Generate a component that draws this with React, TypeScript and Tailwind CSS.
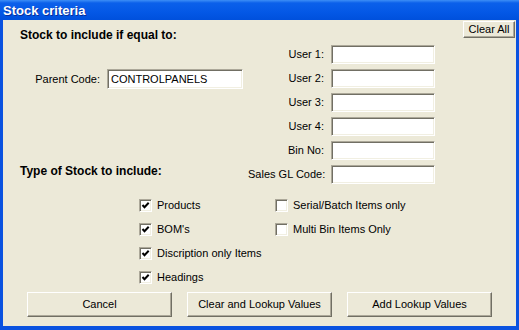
import React from 'react';

function Field({ width, height }: { width: number; height: number }) {
  return (
    <div
      className="bg-white border border-t-[#aca899] border-l-[#aca899] border-b-white border-r-white shadow-[inset_1px_1px_0_#716f64,inset_-1px_-1px_0_#f1efe2]"
      style={{ width, height }}
    />
  );
}

function Check({ label, checked }: { label: string; checked: boolean }) {
  return (
    <div className="flex items-center h-[13px]">
      <div className="relative w-[13px] h-[13px] bg-white border border-t-[#aca899] border-l-[#aca899] border-b-white border-r-white shadow-[inset_1px_1px_0_#716f64,inset_-1px_-1px_0_#f1efe2]">
        {checked && (
          <svg className="absolute left-0 top-0" width="11" height="11" viewBox="0 0 11 11">
            <path d="M2.5 5 L4.5 7.2 L8.7 2.8" fill="none" stroke="#000" strokeWidth="2" />
          </svg>
        )}
      </div>
      <span className="ml-[5px] leading-[13px]">{label}</span>
    </div>
  );
}

function Button({ label, className = '' }: { label: string; className?: string }) {
  return (
    <div
      className={`flex items-center justify-center bg-[#ece9d8] border border-t-white border-l-white border-b-[#716f64] border-r-[#716f64] shadow-[inset_-1px_-1px_0_#aca899] ${className}`}
    >
      {label}
    </div>
  );
}

export default function App() {
  const userFields = ['User 1:', 'User 2:', 'User 3:', 'User 4:', 'Bin No:', 'Sales GL Code:'];

  return (
    <div className="w-[519px] h-[330px] flex flex-col bg-[#0a52e0] font-['Liberation_Sans',Arial,sans-serif] overflow-hidden">
      {/* Title bar */}
      <div className="h-[20px] flex items-center pl-[3px] bg-[linear-gradient(to_bottom,#3d8ef6_0px,#0b60ea_3px,#0458e6_12px,#0050dc_20px)]">
        <span className="text-white font-bold text-[13px] leading-[15px] [text-shadow:1px_1px_0_#0a2f9a]">Stock criteria</span>
      </div>

      {/* Body */}
      <div className="flex-1 mx-[3px] mb-[4px] bg-[#ece9d8] text-[11px] text-black flex flex-col">
        <div className="flex items-start h-[164px]">
          <div className="w-[245px] pl-[17px] flex flex-col">
            <div className="mt-[8px] font-bold text-[12px] leading-[14px]">Stock to include if equal to:</div>
            <div className="mt-[27px] flex items-center">
              <span className="w-[80px] text-right">Parent Code:</span>
              <div className="ml-[7px] w-[136px] h-[20px] bg-white border border-t-[#aca899] border-l-[#aca899] border-b-white border-r-white shadow-[inset_1px_1px_0_#716f64,inset_-1px_-1px_0_#f1efe2] flex items-center pl-[3px]">
                CONTROLPANELS
              </div>
            </div>
            <div className="mt-[75px] font-bold text-[12px] leading-[14px]">Type of Stock to include:</div>
          </div>

          <div className="mt-[25px] flex flex-col gap-[5px]">
            {userFields.map((f) => (
              <div key={f} className="flex items-center">
                <span className="w-[76px] text-right whitespace-nowrap">{f}</span>
                <div className="ml-[7px]">
                  <Field width={104} height={19} />
                </div>
              </div>
            ))}
          </div>

          <Button label="Clear All" className="ml-auto mr-[1px] mt-[1px] w-[52px] h-[17px]" />
        </div>

        <div className="mt-[15px] pl-[136px] flex">
          <div className="w-[136px] flex flex-col gap-[11px]">
            <Check label="Products" checked />
            <Check label="BOM's" checked />
            <Check label="Discription only Items" checked />
            <Check label="Headings" checked />
          </div>
          <div className="flex flex-col gap-[11px]">
            <Check label="Serial/Batch Items only" checked={false} />
            <Check label="Multi Bin Items Only" checked={false} />
          </div>
        </div>

        <div className="mt-[8px] pl-[24px] flex gap-[15px]">
          <Button label="Cancel" className="w-[145px] h-[25px]" />
          <Button label="Clear and Lookup Values" className="w-[145px] h-[25px]" />
          <Button label="Add Lookup Values" className="w-[145px] h-[25px]" />
        </div>
      </div>
    </div>
  );
}
